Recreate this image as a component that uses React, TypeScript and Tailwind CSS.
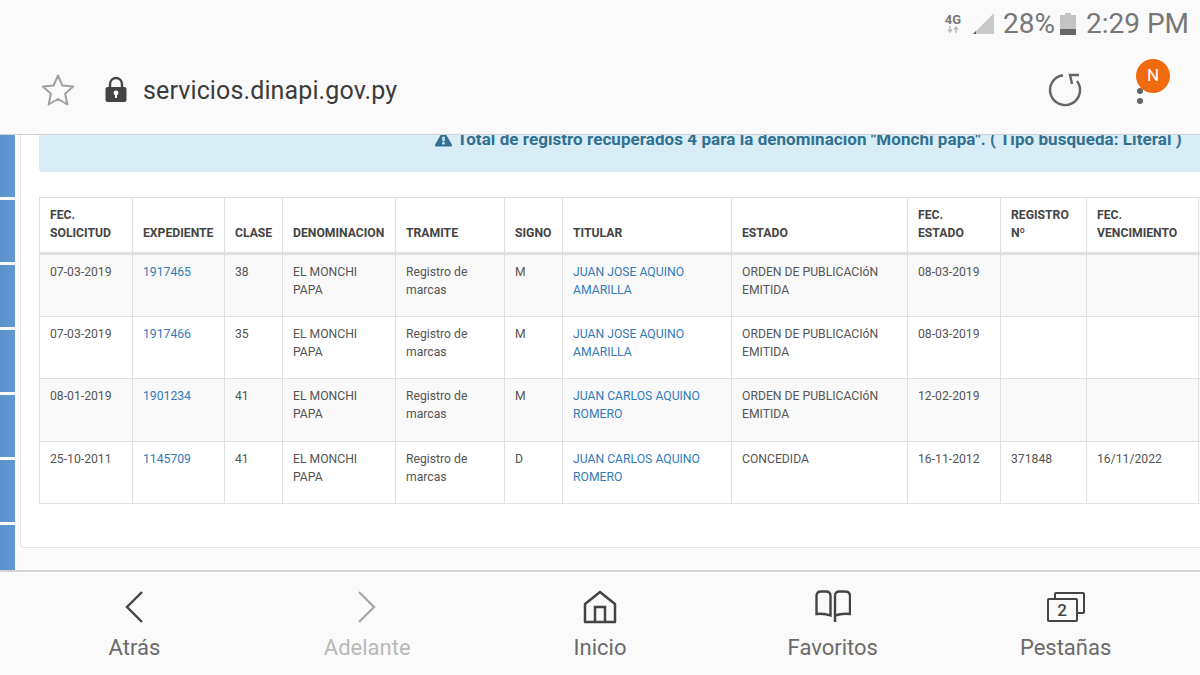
import { FaExclamationTriangle } from "react-icons/fa";

interface Row {
    solicitud: string;
    expediente: string;
    clase: string;
    signo: string;
    titular: string[];
    estado: string[];
    fecEstado: string;
    registro?: string;
    vencimiento?: string;
}

const rows: Row[] = [
    { solicitud: "07-03-2019", expediente: "1917465", clase: "38", signo: "M", titular: ["JUAN JOSE AQUINO", "AMARILLA"], estado: ["ORDEN DE PUBLICACIóN", "EMITIDA"], fecEstado: "08-03-2019" },
    { solicitud: "07-03-2019", expediente: "1917466", clase: "35", signo: "M", titular: ["JUAN JOSE AQUINO", "AMARILLA"], estado: ["ORDEN DE PUBLICACIóN", "EMITIDA"], fecEstado: "08-03-2019" },
    { solicitud: "08-01-2019", expediente: "1901234", clase: "41", signo: "M", titular: ["JUAN CARLOS AQUINO", "ROMERO"], estado: ["ORDEN DE PUBLICACIóN", "EMITIDA"], fecEstado: "12-02-2019" },
    { solicitud: "25-10-2011", expediente: "1145709", clase: "41", signo: "D", titular: ["JUAN CARLOS AQUINO", "ROMERO"], estado: ["CONCEDIDA"], fecEstado: "16-11-2012", registro: "371848", vencimiento: "16/11/2022" },
];

const headers: string[][] = [
    ["FEC.", "SOLICITUD"],
    ["EXPEDIENTE"],
    ["CLASE"],
    ["DENOMINACION"],
    ["TRAMITE"],
    ["SIGNO"],
    ["TITULAR"],
    ["ESTADO"],
    ["FEC.", "ESTADO"],
    ["REGISTRO", "Nº"],
    ["FEC.", "VENCIMIENTO"],
    ["FEC.", "INICIO"],
];

const cellClass = "border border-[#e0e0e0] pl-[10px] pr-[4px] pt-[9px] align-top";

function Lines({ items }: { items: string[] }) {
    return (
        <>
            {items.map((line) => (
                <span key={line} className="block whitespace-nowrap">{line}</span>
            ))}
        </>
    );
}

function StatusBar() {
    return (
        <div className="flex h-[46px] items-center justify-end pr-[11px] pt-[1px] text-[28px] leading-none text-[#777777]">
            <div className="mr-[9px] flex w-[20px] flex-col items-center">
                <span className="text-[13px] font-bold leading-[12px] text-[#777777]">4G</span>
                <svg width="14" height="7" viewBox="0 0 14 7">
                    <path d="M4 0v5M2 3.5 4 6l2-2.5" fill="none" stroke="#bdbdbd" strokeWidth="1.5" />
                    <path d="M10 7V2M8 3.5 10 1l2 2.5" fill="none" stroke="#bdbdbd" strokeWidth="1.5" />
                </svg>
            </div>
            <svg width="23" height="23" viewBox="0 0 23 23" className="mr-[8px]">
                <path d="M22 1v21H1z" fill="#c9c9c9" />
                <path d="M1 22h3v-3z" fill="#555555" />
            </svg>
            <span>28%</span>
            <svg width="16" height="22" viewBox="0 0 16 22" className="ml-[5px] mr-[10px]">
                <path d="M5 0h6v2h5v20H0V2h5z" fill="#c4c4c4" />
                <rect y="16" width="16" height="6" fill="#666666" />
            </svg>
            <span>2:29 PM</span>
        </div>
    );
}

function Toolbar() {
    return (
        <div className="flex flex-1 items-center pb-[1px] pl-[41px]">
            <svg width="34" height="34" viewBox="0 0 34 34">
                <path d="M17 2.5l4.4 10 10.8 1.1-8.1 7.2 2.3 10.7L17 26l-9.4 5.5 2.3-10.7-8.1-7.2 10.8-1.1z" fill="none" stroke="#a0a0a0" strokeWidth="2" strokeLinejoin="round" />
            </svg>
            <svg width="22" height="25" viewBox="0 0 22 25" className="ml-[30px]">
                <path d="M5 11V7a6 6 0 0 1 12 0v4" fill="none" stroke="#444444" strokeWidth="2.4" />
                <rect x="0.5" y="10" width="21" height="15" rx="2" fill="#444444" />
                <circle cx="11" cy="16" r="2.4" fill="#fafafa" />
                <rect x="10" y="17" width="2" height="4" fill="#fafafa" />
            </svg>
            <span className="ml-[16px] pt-[3px] text-[25px] tracking-[0.12px] text-[#3b3b3b]">servicios.dinapi.gov.py</span>
            <svg width="36" height="36" viewBox="0 0 36 36" className="ml-auto mr-[53px]">
                <path d="M16 3.2A15 15 0 1 0 30 9" fill="none" stroke="#666666" strokeWidth="2.4" />
                <path d="M32 3 23 3 25 12" fill="none" stroke="#666666" strokeWidth="2.4" />
            </svg>
            <div className="relative mr-[56px] mt-[4px] flex h-[24px] w-[8px] flex-col items-center justify-end gap-[4px]">
                <span className="h-[6px] w-[6px] rounded-full bg-[#666666]" />
                <span className="h-[6px] w-[6px] rounded-full bg-[#666666]" />
                <span className="absolute left-0 top-[-21px] flex h-[34px] w-[34px] items-center justify-center rounded-full bg-[#f26a0f] text-[17px] text-white">N</span>
            </div>
        </div>
    );
}

function Sidebar() {
    return (
        <div className="flex w-[15px] shrink-0 flex-col gap-[3px] overflow-hidden">
            {[0, 1, 2, 3, 4, 5, 6].map((i) => (
                <div key={i} className="h-[62px] shrink-0 bg-linear-to-r from-[#5a90cc] to-[#6299d3]" />
            ))}
        </div>
    );
}

function ResultsTable() {
    return (
        <table className="w-[1290px] table-fixed border-collapse text-[12.2px] leading-[17.5px] text-[#555555]">
            <colgroup>
                <col className="w-[93px]" />
                <col className="w-[92px]" />
                <col className="w-[58px]" />
                <col className="w-[113px]" />
                <col className="w-[109px]" />
                <col className="w-[58px]" />
                <col className="w-[169px]" />
                <col className="w-[176px]" />
                <col className="w-[93px]" />
                <col className="w-[86px]" />
                <col className="w-[112px]" />
                <col className="w-[131px]" />
            </colgroup>
            <thead>
                <tr className="h-[56px] bg-white">
                    {headers.map((lines, i) => (
                        <th key={i} className={`border border-b-[3px] border-[#e0e0e0] pb-[10px] pl-[10px] pr-[2px] text-left font-bold text-[#444444] ${lines[1] === "Nº" ? "align-top pt-[9px]" : "align-bottom"}`}>
                            <Lines items={lines} />
                        </th>
                    ))}
                </tr>
            </thead>
            <tbody>
                {rows.map((row, i) => (
                    <tr key={row.expediente} className={i % 2 === 0 ? "h-[63px] bg-[#f9f9f9]" : "h-[62px] bg-white"}>
                        <td className={cellClass}>{row.solicitud}</td>
                        <td className={`${cellClass} text-[#337ab7]`}>{row.expediente}</td>
                        <td className={cellClass}>{row.clase}</td>
                        <td className={cellClass}><Lines items={["EL MONCHI", "PAPA"]} /></td>
                        <td className={cellClass}><Lines items={["Registro de", "marcas"]} /></td>
                        <td className={cellClass}>{row.signo}</td>
                        <td className={`${cellClass} text-[#337ab7]`}><Lines items={row.titular} /></td>
                        <td className={cellClass}><Lines items={row.estado} /></td>
                        <td className={cellClass}>{row.fecEstado}</td>
                        <td className={cellClass}>{row.registro}</td>
                        <td className={cellClass}>{row.vencimiento}</td>
                        <td className={cellClass} />
                    </tr>
                ))}
            </tbody>
        </table>
    );
}

function NavItem({ label, muted, children }: { label: string; muted?: boolean; children: React.ReactNode }) {
    return (
        <div className="flex flex-col items-center">
            <div className="flex h-[38px] items-center justify-center">{children}</div>
            <span className={`mt-[9px] text-[22px] leading-[26px] ${muted ? "text-[#b9b9b9]" : "text-[#6a6a6a]"}`}>{label}</span>
        </div>
    );
}

function BottomNav() {
    return (
        <div className="grid h-[105px] shrink-0 grid-cols-5 border-t-2 border-[#d4d4d4] bg-[#fafafa] px-[18px] pt-[16px]">
            <NavItem label="Atrás">
                <svg width="20" height="34" viewBox="0 0 20 34">
                    <path d="M18 2 3 17l15 15" fill="none" stroke="#444444" strokeWidth="2.4" />
                </svg>
            </NavItem>
            <NavItem label="Adelante" muted>
                <svg width="20" height="34" viewBox="0 0 20 34">
                    <path d="M2 2l15 15L2 32" fill="none" stroke="#a9a9a9" strokeWidth="2.4" />
                </svg>
            </NavItem>
            <NavItem label="Inicio">
                <svg width="34" height="34" viewBox="0 0 34 34">
                    <path d="M2 32V14L17 2l15 12v18z" fill="none" stroke="#444444" strokeWidth="2.5" strokeLinejoin="round" />
                    <path d="M12 32V17h10v15" fill="none" stroke="#444444" strokeWidth="2.5" />
                </svg>
            </NavItem>
            <NavItem label="Favoritos">
                <svg width="36" height="34" viewBox="0 0 36 34">
                    <path d="M1.5 24V6Q1.5 1.5 6 1.5H11Q15.5 1.5 15.5 6V25.5Q9 23 1.5 24Z" fill="none" stroke="#444444" strokeWidth="2.4" />
                    <path d="M20 32V6Q20 1.5 24.5 1.5H30Q35 1.5 35 6V24Q27 23 20 25.5" fill="none" stroke="#444444" strokeWidth="2.4" />
                </svg>
            </NavItem>
            <NavItem label="Pestañas">
                <div className="relative h-[30px] w-[38px]">
                    <span className="absolute right-0 top-0 h-[22px] w-[31px] rounded-[2px] border-2 border-[#444444]" />
                    <span className="absolute bottom-0 left-0 flex h-[24px] w-[31px] items-center justify-center rounded-[2px] border-2 border-[#444444] bg-[#fafafa] text-[17px] font-medium leading-none text-[#444444]">2</span>
                </div>
            </NavItem>
        </div>
    );
}

export default function App() {
    return (
        <div className="flex h-[675px] w-[1200px] flex-col overflow-hidden bg-[#fbfbfb] font-['Roboto',sans-serif]">
            <header className="flex h-[135px] shrink-0 flex-col border-b border-[#d0d0d0] bg-[#fafafa]">
                <StatusBar />
                <Toolbar />
            </header>
            <main className="flex min-h-0 flex-1 overflow-hidden">
                <Sidebar />
                <div className="ml-[5px] mt-[-15px] h-[428px] w-[1300px] shrink-0 rounded-[4px] border border-[#e3e3e3] bg-white px-[18px]">
                    <div className="flex h-[51px] items-start rounded-[4px] bg-[#d9edf7] pl-[396px] pt-[8px] text-[17px] font-bold leading-[20px] tracking-[0.06px] text-[#31708f]">
                        <FaExclamationTriangle className="mr-[5px] mt-[2px] h-[16px] w-[17px]" />
                        <span className="whitespace-nowrap">Total de registro recuperados 4 para la denominacion "Monchi papa". ( Tipo busqueda: Literal )</span>
                    </div>
                    <div className="mt-[25px]">
                        <ResultsTable />
                    </div>
                </div>
            </main>
            <BottomNav />
        </div>
    );
}
